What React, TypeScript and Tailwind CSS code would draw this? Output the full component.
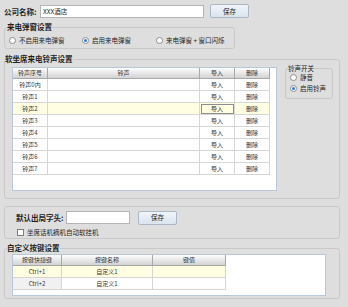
import React from "react";

const rings = ["铃声0内", "铃声1", "铃声2", "铃声3", "铃声4", "铃声5", "铃声6", "铃声7"];

const Radio = ({ checked, label }: { checked?: boolean; label: string }) => (
  <div className="flex items-center gap-[3px]">
    <span className="flex h-[7px] w-[7px] items-center justify-center rounded-full border border-[#8e8e8e] bg-white">
      {checked && <span className="h-[3px] w-[3px] rounded-full bg-[#2b78d0]" />}
    </span>
    <span className="text-[6.5px] leading-none">{label}</span>
  </div>
);

const SaveButton = ({ className = "" }: { className?: string }) => (
  <button
    className={`h-[14px] w-[39px] rounded-[2px] border border-[#aab8c6] bg-gradient-to-b from-[#f1f5f9] to-[#d9e4ee] text-[6.5px] leading-none text-[#222] ${className}`}
  >
    保存
  </button>
);

const headCell =
  "flex items-center justify-center border-r border-b border-[#a8a8a8] bg-gradient-to-b from-[#fdfdfd] to-[#d3d3d3] text-[6px] leading-none text-[#333]";

const App = () => {
  return (
    <div className="h-[307px] w-[348px] bg-[#dedede] font-['Noto_Sans_CJK_SC','Liberation_Sans',sans-serif] text-[#1e1e1e]">
      {/* 公司名称 */}
      <div className="flex items-start pl-[4px] pt-[4px]">
        <span className="mt-[4px] w-[36px] text-[7.5px] font-bold leading-none">公司名称:</span>
        <div className="mt-[1px] flex h-[13px] w-[164px] items-center border border-[#b4b4b4] bg-white pl-[2px] text-[6.5px] leading-none">
          XXX酒店
        </div>
        <SaveButton className="ml-[6px]" />
      </div>

      {/* 来电弹窗设置 */}
      <fieldset className="ml-[4px] mt-[4px] w-[231px] rounded-[3px] border border-[#c9c9c9] p-0">
        <legend className="ml-[2px] h-[10px] text-[7.5px] font-bold leading-[10px]">来电弹窗设置</legend>
        <div className="flex h-[16px] items-center pl-[4px]">
          <div className="w-[73px]">
            <Radio label="不启用来电弹窗" />
          </div>
          <div className="w-[74px]">
            <Radio checked label="启用来电弹窗" />
          </div>
          <Radio label="来电弹窗 + 窗口闪烁" />
        </div>
      </fieldset>

      {/* 软坐席来电铃声设置 */}
      <fieldset className="ml-[4px] mt-[5px] w-[336px] rounded-[3px] border border-[#c9c9c9] p-0">
        <legend className="h-[10px] text-[7.5px] font-bold leading-[10px]">软坐席来电铃声设置</legend>
        <div className="flex items-start pb-[7px] pl-[7px]">
          <div className="mt-[3px] h-[124px] w-[265px] border border-[#b7c8d9] bg-white">
            <div className="grid grid-cols-[35px_152px_35px_35px]">
              <div className={`${headCell} h-[11px]`}>铃声序号</div>
              <div className={`${headCell} h-[11px]`}>铃声</div>
              <div className={`${headCell} h-[11px]`}>导入</div>
              <div className={`${headCell} h-[11px]`}>删除</div>
              {rings.map((name, i) => {
                const bg = i === 2 ? "bg-[#fffde2]" : "bg-white";
                const cell = `flex h-[12px] items-center justify-center border-r border-b border-[#d6d6d6] text-[6px] leading-none text-[#333] ${bg}`;
                return (
                  <React.Fragment key={name}>
                    <div className={cell}>{name}</div>
                    <div className={cell} />
                    <div className={cell}>
                      {i === 2 ? (
                        <span className="flex h-[10px] w-[33px] items-center justify-center border border-[#8e8e8e]">导入</span>
                      ) : (
                        "导入"
                      )}
                    </div>
                    <div className={cell}>删除</div>
                  </React.Fragment>
                );
              })}
            </div>
          </div>

          {/* 铃声开关 */}
          <fieldset className="-mt-[1px] ml-[8px] w-[48px] rounded-[3px] border border-[#c9c9c9] p-0">
            <legend className="ml-[2px] h-[10px] text-[6.5px] leading-[10px]">铃声开关</legend>
            <div className="-mt-[1px] flex flex-col pb-[4px] pl-[4px]">
              <div className="flex h-[11px] items-center">
                <Radio label="静音" />
              </div>
              <div className="flex h-[11px] items-center">
                <Radio checked label="启用铃声" />
              </div>
            </div>
          </fieldset>
        </div>
      </fieldset>

      {/* 默认出局字头 */}
      <fieldset className="ml-[4px] mt-[7px] w-[336px] rounded-[3px] border border-[#c9c9c9] p-0">
        <div className="pb-[1px] pl-[11px] pt-[4px]">
          <div className="flex h-[13px] items-center">
            <span className="w-[50px] text-[7.5px] font-bold leading-none">默认出局字头:</span>
            <div className="h-[13px] w-[64px] border border-[#b4b4b4] bg-white" />
            <SaveButton className="ml-[8px] h-[13px]" />
          </div>
          <div className="mt-[3px] flex h-[10px] items-center gap-[3px] pl-[1px]">
            <span className="h-[7px] w-[7px] border border-[#7e7e7e] bg-white" />
            <span className="text-[6.5px] leading-none">坐席话机摘机自动软挂机</span>
          </div>
        </div>
      </fieldset>

      {/* 自定义按键设置 */}
      <fieldset className="ml-[4px] mt-[4px] w-[336px] rounded-[3px] border border-[#c9c9c9] p-0">
        <legend className="ml-[2px] h-[10px] text-[7.5px] font-bold leading-[10px]">自定义按键设置</legend>
        <div className="pb-[2px] pl-[7px] pt-[1px]">
          <div className="h-[42px] w-[314px] border border-[#b7c8d9] bg-white">
            <div className="grid w-[213px] grid-cols-[49px_91px_73px]">
              <div className={`${headCell} h-[11px]`}>按键快捷键</div>
              <div className={`${headCell} h-[11px]`}>按键名称</div>
              <div className={`${headCell} h-[11px]`}>键值</div>
              {["Ctrl+1", "Ctrl+2"].map((key, i) => {
                const bg = i === 0 ? "bg-[#fffde2]" : "bg-white";
                const cell = `flex h-[12px] items-center justify-center border-r border-b border-[#d6d6d6] text-[6px] leading-none text-[#333]`;
                return (
                  <React.Fragment key={key}>
                    <div className={`${cell} ${i === 0 ? bg : "bg-[#f1f1f1]"}`}>{key}</div>
                    <div className={`${cell} ${bg}`}>自定义1</div>
                    <div className={`${cell} ${bg}`} />
                  </React.Fragment>
                );
              })}
            </div>
          </div>
        </div>
      </fieldset>
    </div>
  );
};

export default App;
